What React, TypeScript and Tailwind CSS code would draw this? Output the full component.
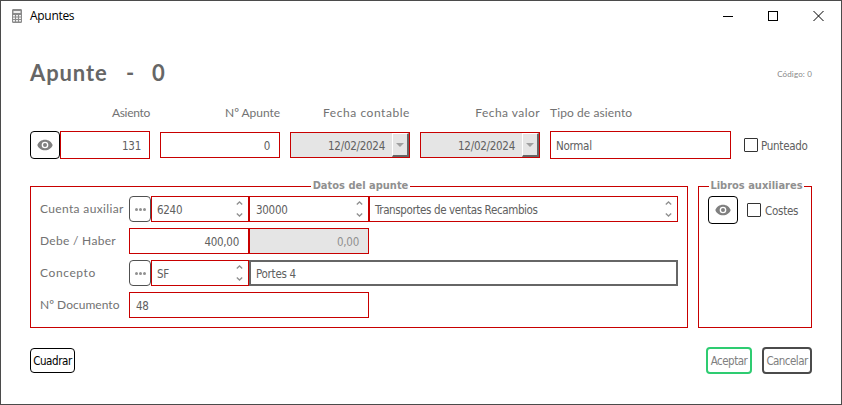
import type { ReactNode } from 'react';

const label = "font-['Lato',sans-serif] text-[12px] leading-4 text-[#727272] whitespace-nowrap";
const tahoma = "font-['DejaVu_Sans_Condensed','DejaVu_Sans',sans-serif] [font-stretch:condensed] whitespace-nowrap";
const value = `${tahoma} text-[11.5px] leading-[14px] text-[#606060] tracking-[-0.270px]`;

function Field({ children, className = '' }: { children?: ReactNode; className?: string }) {
  return (
    <div className={`flex shrink-0 items-center border border-[#c80000] ${value} ${className}`}>
      {children}
    </div>
  );
}

function Eye() {
  return (
    <svg width="16" height="16" viewBox="0 0 24 24" fill="#808080">
      <path d="M12 4C6.500 4 2 7.300 0.500 12 2 16.700 6.500 20 12 20s10-3.300 11.500-8C22 7.300 17.500 4 12 4zm0 13a5 5 0 1 1 0-10 5 5 0 0 1 0 10zm0-8a3 3 0 1 0 0 6 3 3 0 0 0 0-6z" />
    </svg>
  );
}

function EyeButton() {
  return (
    <button className="flex h-7 w-[30px] shrink-0 items-center justify-center rounded-[4px] border border-black">
      <Eye />
    </button>
  );
}

function MoreButton() {
  return (
    <button className="flex h-[26px] w-[22px] shrink-0 items-center justify-center gap-px rounded-[4px] border border-[#505050]">
      <span className="size-[3px] rounded-[1.500px] bg-[#909090]" />
      <span className="size-[3px] rounded-[1.500px] bg-[#909090]" />
      <span className="size-[3px] rounded-[1.500px] bg-[#909090]" />
    </button>
  );
}

function Spinner() {
  return (
    <svg className="ml-auto mr-[5px] shrink-0" width="7" height="18" viewBox="0 0 7 18" fill="none" stroke="#909090" strokeWidth="1.300">
      <path d="M0.800 4.500 3.500 2l2.700 2.500M0.800 13.500 3.500 16l2.700-2.500" />
    </svg>
  );
}

function DateField({ date }: { date: string }) {
  return (
    <Field className="h-[26px] w-[120px] bg-[#e5e5e5]">
      <span className="flex-1 text-right pr-[7px] pt-[2px]">{date}</span>
      <span className="flex h-6 w-[17px] items-center justify-center border-t border-r-2 border-b-2 border-l border-t-white border-r-[#666] border-b-[#666] border-l-white">
        <svg width="8" height="4" viewBox="0 0 8 4" fill="#a0a0a0"><path d="M0 0h8L4 4z" /></svg>
      </span>
    </Field>
  );
}

function Check({ text, className = '' }: { text: string; className?: string }) {
  return (
    <label className={`flex items-center ${className}`}>
      <span className="size-[14px] shrink-0 rounded-[1px] border border-[#333]" />
      <span className={`pt-[2px] ${value}`}>{text}</span>
    </label>
  );
}

function Group({ title, className, legendClass, children }: { title: string; className: string; legendClass: string; children: ReactNode }) {
  return (
    <section className={`relative border border-[#c80000] ${className}`}>
      <h2 className={`absolute -top-[8px] bg-white px-px text-center text-[11px] leading-[14px] font-bold text-[#909090] ${tahoma} ${legendClass}`}>{title}</h2>
      {children}
    </section>
  );
}

export default function App() {
  return (
    <main className="flex h-[405px] w-[842px] flex-col overflow-hidden border border-[#4b4b4b] bg-white">
      <header className="flex h-[29px] shrink-0 items-center pl-[11px]">
        <svg width="10" height="14" viewBox="0 0 10 14">
          <rect x="0.500" y="0.500" width="9" height="13" rx="0.500" fill="#8a8a8a" stroke="#8a8a8a" />
          <path d="M1.500 2h7v2h-7zM1 6h2v1.500H1zM4 6h2v1.500H4zM7 6h2v1.500H7zM1 8.500h2V10H1zM4 8.500h2V10H4zM7 8.500h2V10H7zM1 11h2v1.500H1zM4 11h2v1.500H4zM7 11h2v1.500H7z" fill="#eee" />
        </svg>
        <h1 className="ml-2 font-['Open_Sans',sans-serif] text-[12px] leading-4 tracking-[-0.300px] text-black">Apuntes</h1>
        <svg className="ml-auto mr-[17px]" width="102" height="12" viewBox="0 0 102 12" fill="none" stroke="#000">
          <path d="M1 6.500h10" />
          <rect x="46.500" y="1.500" width="9" height="9" />
          <path d="M91.500 1l10 10M101.500 1l-10 10" />
        </svg>
      </header>

      <div className="mt-[28px] flex h-8 shrink-0 items-center justify-between pl-[29px] pr-[29px]">
        <div className="-mt-[2px] flex font-['Lato',sans-serif] text-[22px] leading-8 font-bold text-[#666]">
          <span className="w-[96px] tracking-[0.900px]">Apunte</span>
          <span className="w-[26px]">-</span>
          <span>0</span>
        </div>
        <span className="font-['Lato',sans-serif] text-[8px] leading-3 tracking-[0.150px] text-[#888]">Código: 0</span>
      </div>

      <div className="mt-[15px] flex h-4 shrink-0 pl-[29px]">
        <span className={`w-[120px] text-right tracking-[-0.300px] ${label}`}>Asiento</span>
        <span className={`w-[130px] text-right tracking-[-0.050px] ${label}`}>Nº Apunte</span>
        <span className={`w-[130px] text-right tracking-[0.550px] ${label}`}>Fecha contable</span>
        <span className={`w-[130px] text-right tracking-[0.450px] ${label}`}>Fecha valor</span>
        <span className={`ml-[10px] tracking-[0.100px] ${label}`}>Tipo de asiento</span>
      </div>

      <div className="mt-[10px] flex h-7 shrink-0 items-center pl-[29px]">
        <EyeButton />
        <Field className="h-7 w-[90px] justify-end pr-2 pt-[2px]">131</Field>
        <Field className="ml-[10px] h-[26px] w-[120px] justify-end pr-[9px] pt-[2px]">0</Field>
        <div className="ml-[10px]"><DateField date="12/02/2024" /></div>
        <div className="ml-[10px]"><DateField date="12/02/2024" /></div>
        <Field className="ml-[10px] h-7 w-[181px] pl-[5px] pt-[2px]">Normal</Field>
        <Check text="Punteado" className="ml-[13px] gap-[3px]" />
      </div>

      <div className="mt-[27px] flex h-[142px] shrink-0 gap-[10px] pl-[29px]">
        <Group title="Datos del apunte" legendClass="left-[280px] w-[99px]" className="flex w-[658px] flex-col gap-[6px] pt-[9px] pl-[9px]">
          <div className="flex h-[26px] items-center">
            <span className={`w-[89px] shrink-0 tracking-[0.350px] ${label}`}>Cuenta auxiliar</span>
            <MoreButton />
            <Field className="h-[26px] w-[98px] pl-[5px]"><span className="pt-[2px]">6240</span><Spinner /></Field>
            <Field className="h-[26px] w-[120px] pl-[6px]"><span className="pt-[2px]">30000</span><Spinner /></Field>
            <Field className="h-[26px] w-[309px] pl-[5px]"><span className="pt-[2px] tracking-[-0.370px]">Transportes de ventas Recambios</span><Spinner /></Field>
          </div>
          <div className="flex h-[26px] items-center">
            <span className={`w-[89px] shrink-0 tracking-[0.300px] ${label}`}>Debe / Haber</span>
            <Field className="h-[26px] w-[120px] justify-end pr-[9px] pt-[2px]">400,00</Field>
            <Field className="h-[26px] w-[120px] justify-end bg-[#e5e5e5] pr-[9px] pt-[2px]"><span className="text-[#909090]">0,00</span></Field>
          </div>
          <div className="flex h-[26px] items-center">
            <span className={`w-[89px] shrink-0 tracking-[0.600px] ${label}`}>Concepto</span>
            <MoreButton />
            <Field className="h-[26px] w-[98px] pl-[5px]"><span className="pt-[2px]">SF</span><Spinner /></Field>
            <div className={`flex h-[26px] w-[429px] items-center border-2 border-[#666] pt-[2px] pl-[5px] ${value}`}>Portes 4</div>
          </div>
          <div className="flex h-[26px] items-center">
            <span className={`w-[89px] shrink-0 tracking-[0.020px] ${label}`}>Nº Documento</span>
            <Field className="h-[26px] w-[240px] pl-[6px] pt-[2px]">48</Field>
          </div>
        </Group>
        <Group title="Libros auxiliares" legendClass="left-[10px] w-[95px]" className="w-[114px] pt-[9px] pl-[9px]">
          <div className="flex items-center">
            <EyeButton />
            <Check text="Costes" className="ml-[9px] gap-[4px]" />
          </div>
        </Group>
      </div>

      <footer className="mt-[18px] flex h-[29px] shrink-0 items-center pl-[29px]">
        <button className={`flex h-[25px] w-[45px] items-center justify-center rounded-[4px] border border-black pt-[2px] text-[11.500px] tracking-[-0.400px] text-black ${tahoma}`}>Cuadrar</button>
        <button className={`ml-[631px] flex h-[27px] w-[46px] items-center justify-center rounded-[4px] border-2 border-[#2ecc71] pt-[2px] text-[11.500px] tracking-[-0.500px] text-[#808080] ${tahoma}`}>Aceptar</button>
        <button className={`ml-[10px] flex h-[27px] w-[50px] items-center justify-center rounded-[4px] border-2 border-[#4b4b4b] pt-[2px] text-[11.500px] tracking-[-0.550px] text-[#808080] ${tahoma}`}>Cancelar</button>
      </footer>
    </main>
  );
}
